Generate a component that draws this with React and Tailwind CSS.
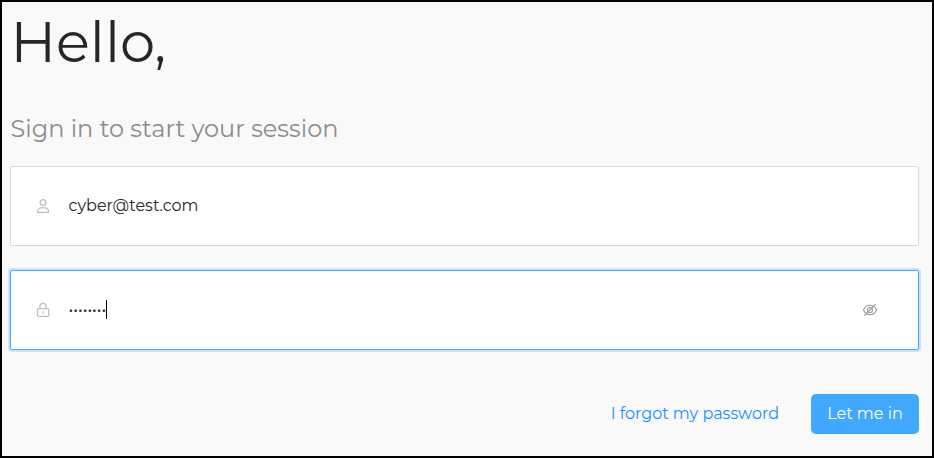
function UserIcon() {
  return (
    <svg className="h-4 w-4 shrink-0" viewBox="0 0 16 16" fill="none" stroke="#bfbfbf" strokeWidth="1.3">
      <circle cx="8" cy="4.5" r="2.9" />
      <path d="M2.6 14.3V13.2C2.6 11.2 4.8 9.7 8 9.7s5.4 1.5 5.4 3.5v1.1Z" />
    </svg>
  );
}

function LockIcon() {
  return (
    <svg className="h-4 w-4 shrink-0" viewBox="0 0 16 16" fill="none" stroke="#bfbfbf" strokeWidth="1.3">
      <rect x="2.5" y="6.6" width="11.2" height="7.8" rx="1.2" />
      <path d="M4.9 6.6V4.3C4.9 2.5 6.2 1.4 8 1.4s3.1 1.1 3.1 2.9v2.3M8 9v2.8" />
    </svg>
  );
}

function EyeOffIcon() {
  return (
    <svg className="h-4 w-4 shrink-0" viewBox="0 0 16 16" fill="none" stroke="#959595" strokeWidth="1.05">
      <path d="M1.5 8C2.7 5 4.9 3.3 8 3.3S13.3 5 14.5 8c-1.2 3-3.4 4.7-6.5 4.7S2.7 11 1.5 8Z" />
      <circle cx="8" cy="8" r="2.5" />
      <path d="M2.1 13.8 13.7 2.2" />
    </svg>
  );
}

export default function App() {
  return (
    <main className="h-[458px] w-[934px] border-2 border-black bg-[#f9f9f9] pl-2 pr-[13px] font-['Montserrat','Inter',sans-serif] text-base font-normal text-[#262626]">
      <h1 className="h-[111px] pt-[6px] pl-[0.5px] text-[56px] leading-[68px] font-normal"><span>Hello,</span></h1>
      <h2 className="h-[53px] pl-[0.5px] text-2xl leading-8 font-normal text-[#8c8c8c]"><span>Sign in to start your session</span></h2>
      <div className="flex h-20 items-center rounded-[2px] border border-[#d9d9d9] bg-white pl-6">
        <UserIcon />
        <span className="ml-[17.5px]">cyber@test.com</span>
      </div>
      <div className="mt-6 flex h-20 items-center rounded-[2px] border border-[#40a9ff] bg-white pr-[40px] pl-6 shadow-[0_0_0_2px_rgba(24,144,255,0.2)]">
        <LockIcon />
        <span className="ml-[17.5px] leading-6">••••••••</span>
        <i className="mb-px h-[19px] w-px bg-black" />
        <div className="ml-auto"><EyeOffIcon /></div>
      </div>
      <div className="mt-11 flex h-10 items-center justify-end gap-8">
        <a className="text-[#1890ff]">I forgot my password</a>
        <button className="h-10 w-[108px] rounded-[5px] bg-[#40a9ff] text-white">Let me in</button>
      </div>
    </main>
  );
}
